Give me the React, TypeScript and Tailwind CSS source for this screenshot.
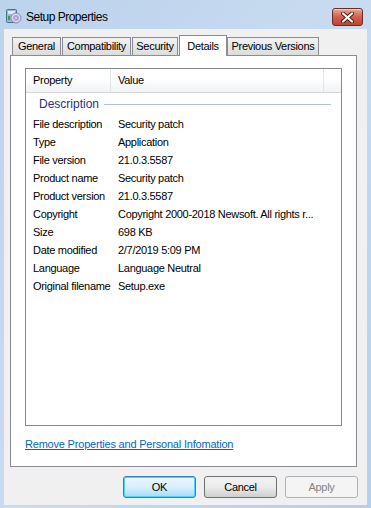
import React from "react";

const rows: [string, string][] = [
  ["File description", "Security patch"],
  ["Type", "Application"],
  ["File version", "21.0.3.5587"],
  ["Product name", "Security patch"],
  ["Product version", "21.0.3.5587"],
  ["Copyright", "Copyright 2000-2018 Newsoft. All rights r..."],
  ["Size", "698 KB"],
  ["Date modified", "2/7/2019 5:09 PM"],
  ["Language", "Language Neutral"],
  ["Original filename", "Setup.exe"],
];

const SetupIcon = () => (
  <svg width="17" height="17" viewBox="0 0 17 17">
    <rect x="1.5" y="2.5" width="10" height="13" rx="1" fill="#9bb7d9" stroke="#4a6e9c" />
    <rect x="3" y="4" width="7" height="3" fill="#dfe9f5" />
    <rect x="3" y="9" width="2" height="4" fill="#3aa03a" />
    <circle cx="11" cy="11" r="5" fill="#d8d8e8" stroke="#7a7a9a" strokeWidth="0.8" />
    <circle cx="11" cy="11" r="3" fill="#b9a4d8" />
    <circle cx="11" cy="11" r="1.2" fill="#ffffff" stroke="#7a7a9a" strokeWidth="0.5" />
  </svg>
);

const CloseButton = () => (
  <div className="w-[31px] h-[18px] rounded-[3px] border border-[#6b2a24] bg-gradient-to-b from-[#e8a493] via-[#d25f4c] to-[#c2432f] flex items-center justify-center shadow-[inset_0_1px_0_rgba(255,255,255,0.5)]">
    <svg width="13" height="11" viewBox="0 0 13 11">
      <path d="M2 1.5 L11 9.5 M11 1.5 L2 9.5" stroke="#4a1a14" strokeWidth="4" strokeLinecap="round" />
      <path d="M2 1.5 L11 9.5 M11 1.5 L2 9.5" stroke="#ffffff" strokeWidth="2.2" strokeLinecap="round" />
    </svg>
  </div>
);

const Tab = ({ label, className }: { label: string; className: string }) => (
  <div
    className={`h-[18px] bg-gradient-to-b from-[#f2f2f2] to-[#dcdcdc] border border-b-0 border-[#898c95] flex items-center justify-center ${className}`}
  >
    {label}
  </div>
);

const App = () => {
  return (
    <div
      className="w-[371px] h-[508px] flex flex-col bg-gradient-to-br from-[#bcd3ec] via-[#c8dbf0] to-[#b7cfe9] text-[11px] tracking-[-0.3px] text-black"
      style={{ fontFamily: '"Liberation Sans", Arial, sans-serif' }}
    >
      {/* title bar */}
      <div className="h-[29px] flex items-start pt-[7px] pl-[5px] pr-[8px]">
        <SetupIcon />
        <span className="ml-[4px] mt-[1px] text-[12px] tracking-[-0.5px] text-black">Setup Properties</span>
        <div className="ml-auto mt-[1px]">
          <CloseButton />
        </div>
      </div>

      {/* client area */}
      <div className="mx-[4px] mb-[3px] flex-1 bg-[#f0f0f0] flex flex-col pt-[6px] pl-[6px] pr-[10px]">
        <div className="flex items-end pl-[2px] h-[20px] relative z-10">
          <Tab label="General" className="w-[49px]" />
          <Tab label="Compatibility" className="w-[69px] ml-[1px]" />
          <Tab label="Security" className="w-[46px] ml-[1px]" />
          <div className="h-[21px] -mb-px w-[48px] ml-[1px] bg-white border border-b-0 border-[#898c95] flex justify-center pt-[2px]">
            Details
          </div>
          <Tab label="Previous Versions" className="w-[92px]" />
        </div>

        <div className="h-[412px] bg-white border border-[#898c95] flex flex-col pt-[12px] px-[14px]">
          {/* list view */}
          <div className="h-[358px] border border-[#828790] flex flex-col">
            <div className="h-[24px] flex bg-gradient-to-b from-white from-40% to-[#f1f2f4] border-b border-[#d5d5d5]">
              <div className="w-[85px] pl-[7px] flex items-center border-r border-[#e3e5e9]">Property</div>
              <div className="w-[213px] pl-[7px] flex items-center border-r border-[#e3e5e9]">Value</div>
              <div className="flex-1" />
            </div>
            <div className="flex items-center h-[20px] mt-[1px] pl-[13px] pr-[10px]">
              <span className="text-[#1e3287] text-[12px] tracking-normal">Description</span>
              <div className="flex-1 ml-[5px] h-px bg-[#b6c2d9]" />
            </div>
            <div className="flex flex-col mt-[1px]">
              {rows.map(([k, v]) => (
                <div key={k} className="h-[18px] flex items-center">
                  <span className="w-[92px] pl-[7px] whitespace-nowrap">{k}</span>
                  <span className="whitespace-nowrap">{v}</span>
                </div>
              ))}
            </div>
          </div>
          <a href="#" className="mt-[10px] text-[#0066cc] underline w-fit tracking-[-0.2px]">
            Remove Properties and Personal Infomation
          </a>
        </div>

        <div className="flex justify-end gap-[8px] mt-[9px] mr-[-1px]">
          <button className="w-[73px] h-[22px] rounded-[3px] border border-[#3c7fb1] bg-gradient-to-b from-[#eaf6fd] via-[#d9f0fc] to-[#a7d9f5] shadow-[inset_0_0_0_1px_#48d4fd]">
            OK
          </button>
          <button className="w-[73px] h-[22px] rounded-[3px] border border-[#707070] bg-gradient-to-b from-[#f2f2f2] via-[#ebebeb] to-[#cfcfcf]">
            Cancel
          </button>
          <button className="w-[73px] h-[22px] rounded-[3px] border border-[#adb2b5] bg-[#f4f4f4] text-[#838383]">
            Apply
          </button>
        </div>
      </div>
    </div>
  );
};

export default App;
